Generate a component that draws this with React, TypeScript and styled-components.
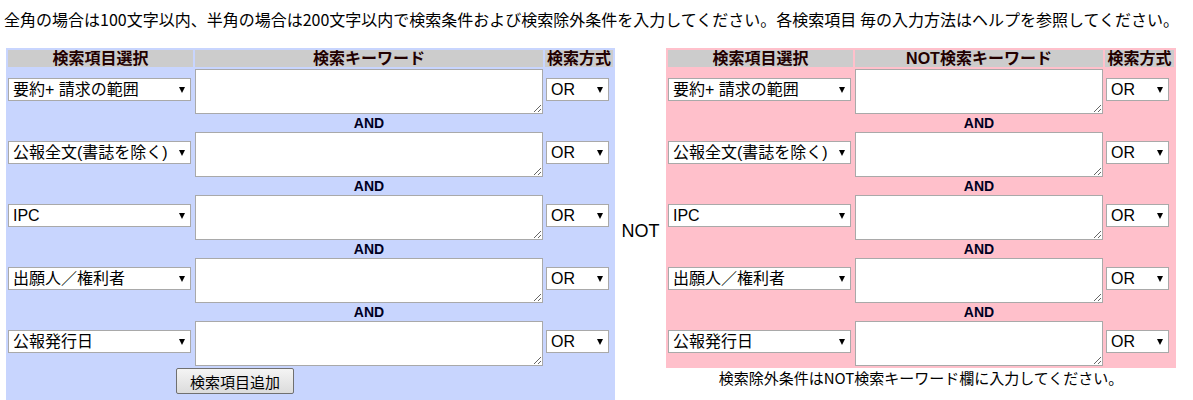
import React from 'react';
import styled, { createGlobalStyle } from 'styled-components';

const GlobalStyle = createGlobalStyle`
  body {
    margin: 0;
    background: #ffffff;
    color: #000000;
    font-family: "Liberation Sans", "Noto Sans CJK JP", sans-serif;
    font-size: 16px;
  }
`;

const Page = styled.div`
  padding: 7px 0 0 4px;
`;

const Intro = styled.p`
  margin: 0 0 17px 0;
  line-height: 24px;
  white-space: nowrap;
  font-family: "Noto Sans CJK JP", sans-serif;
`;

const Layout = styled.div`
  display: flex;
  align-items: center;
  margin-left: 2px;
`;

const Panel = styled.div<{ $cols: string; $bg: string; $bottom: number }>`
  display: grid;
  grid-template-columns: ${(p) => p.$cols};
  column-gap: 2px;
  row-gap: 2px;
  padding: 2px 2px ${(p) => p.$bottom}px 2px;
  background: ${(p) => p.$bg};
  align-items: start;
`;

const HeaderCell = styled.div`
  height: 17px;
  line-height: 17px;
  background: #cccccc;
  text-align: center;
  font-weight: bold;
  color: #220000;
  white-space: nowrap;
`;

const SelectWrap = styled.div<{ $col: number; $width: number }>`
  grid-column: ${(p) => p.$col};
  position: relative;
  width: ${(p) => p.$width}px;
  margin-top: 9px;
  margin-left: ${(p) => (p.$col === 3 ? 1 : 0)}px;

  &::after {
    content: '';
    position: absolute;
    right: 6px;
    top: 9px;
    border-left: 3.5px solid transparent;
    border-right: 3.5px solid transparent;
    border-top: 6px solid #000;
    pointer-events: none;
  }
`;

const Select = styled.select`
  appearance: none;
  display: block;
  width: 100%;
  height: 23px;
  margin: 0;
  padding: 0 4px;
  border: 1px solid #a9a9a9;
  border-radius: 0;
  background: #ffffff;
  color: #000;
  font-family: "Liberation Sans", "Noto Sans CJK JP", sans-serif;
  font-size: 16px;
  line-height: 21px;
`;

const KeywordArea = styled.textarea`
  grid-column: 2;
  display: block;
  box-sizing: border-box;
  width: 100%;
  height: 45px;
  margin: 0;
  border: 1px solid #a9a9a9;
  background: #ffffff;
  font-size: 14px;
`;

const AndLabel = styled.div`
  grid-column: 2;
  height: 14px;
  line-height: 14px;
  text-align: center;
  font-weight: bold;
  font-size: 14px;
  color: #000022;
`;

const AddButton = styled.button`
  grid-column: 1 / 4;
  justify-self: start;
  margin-left: 168px;
  width: 118px;
  height: 26px;
  padding: 0;
  border: 1px solid #707070;
  border-radius: 2px;
  background: linear-gradient(#f4f4f4, #dcdcdc);
  font-family: "Noto Sans CJK JP", sans-serif;
  font-size: 15px;
  color: #000;
`;

const NotLabel = styled.div`
  width: 51px;
  text-align: center;
  font-size: 18px;
  line-height: 22px;
`;

const RightColumn = styled.div`
  align-self: flex-start;
  display: flex;
  flex-direction: column;
`;

const Caption = styled.div`
  text-align: center;
  font-family: "Noto Sans CJK JP", sans-serif;
  font-size: 15px;
  line-height: 18px;
  margin-top: 1px;
`;

const fields = ['要約+ 請求の範囲', '公報全文(書誌を除く)', 'IPC', '出願人／権利者', '公報発行日'];

type SearchTableProps = {
  keywordTitle: string;
  cols: string;
  bg: string;
  bottom: number;
  withButton?: boolean;
};

function SearchTable(props: SearchTableProps) {
  const { keywordTitle, cols, bg, bottom, withButton } = props;
  return (
    <Panel $cols={cols} $bg={bg} $bottom={bottom}>
      <HeaderCell>検索項目選択</HeaderCell>
      <HeaderCell>{keywordTitle}</HeaderCell>
      <HeaderCell>検索方式</HeaderCell>
      {fields.map((field, i) => (
        <React.Fragment key={field}>
          <SelectWrap $col={1} $width={183}>
            <Select defaultValue={field}>
              <option>{field}</option>
            </Select>
          </SelectWrap>
          <KeywordArea />
          <SelectWrap $col={3} $width={63}>
            <Select defaultValue="OR">
              <option>OR</option>
              <option>AND</option>
            </Select>
          </SelectWrap>
          {i < fields.length - 1 && <AndLabel>AND</AndLabel>}
        </React.Fragment>
      ))}
      {withButton && <AddButton type="button">検索項目追加</AddButton>}
    </Panel>
  );
}

export default function App() {
  return (
    <Page>
      <GlobalStyle />
      <Intro>
        全角の場合は100文字以内、半角の場合は200文字以内で検索条件および検索除外条件を入力してください。各検索項目 毎の入力方法はヘルプを参照してください。
      </Intro>
      <Layout>
        <SearchTable
          keywordTitle="検索キーワード"
          cols="185px 348px 68px"
          bg="#c8d5fe"
          bottom={20}
          withButton
        />
        <NotLabel>NOT</NotLabel>
        <RightColumn>
          <SearchTable
            keywordTitle="NOT検索キーワード"
            cols="185px 248px 69px"
            bg="#ffc0cb"
            bottom={2}
          />
          <Caption>検索除外条件はNOT検索キーワード欄に入力してください。</Caption>
        </RightColumn>
      </Layout>
    </Page>
  );
}
